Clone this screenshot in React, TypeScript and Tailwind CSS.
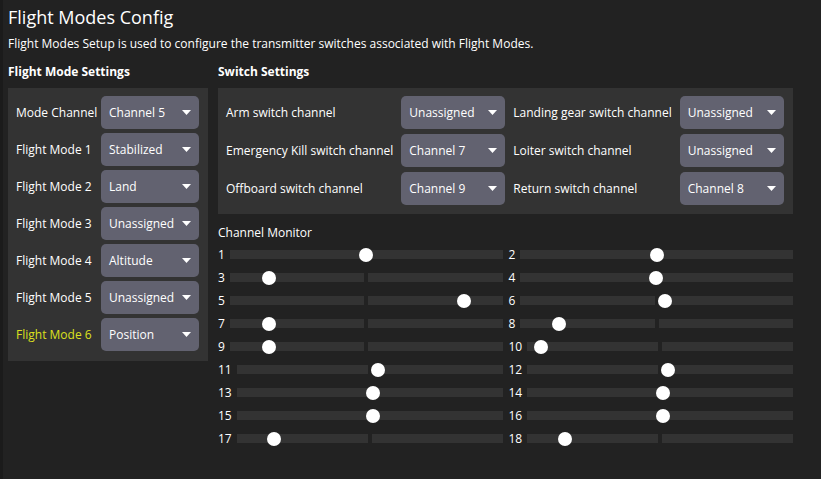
import React from "react";

/* ── Data ───────────────────────────────────────────────────────── */
const FLIGHT_MODES = [
  { label: "Mode Channel", value: "Channel 5" },
  { label: "Flight Mode 1", value: "Stabilized" },
  { label: "Flight Mode 2", value: "Land" },
  { label: "Flight Mode 3", value: "Unassigned" },
  { label: "Flight Mode 4", value: "Altitude" },
  { label: "Flight Mode 5", value: "Unassigned" },
  { label: "Flight Mode 6", value: "Position", active: true },
];

const SWITCHES = [
  ["Arm switch channel", "Unassigned", "Landing gear switch channel", "Unassigned"],
  ["Emergency Kill switch channel", "Channel 7", "Loiter switch channel", "Unassigned"],
  ["Offboard switch channel", "Channel 9", "Return switch channel", "Channel 8"],
];

// knob position as a fraction of the track width, channels 1..18
const CHANNELS = [
  0.5, 0.5, 0.143, 0.496, 0.86, 0.529, 0.143, 0.142, 0.142, 0.051, 0.532, 0.53,
  0.512, 0.51, 0.512, 0.51, 0.142, 0.142,
];

/* ── Combo box ──────────────────────────────────────────────────── */
function Combo({ value, width }: { value: string; width: string }) {
  return (
    <div
      className={`${width} h-[33px] rounded-[5px] bg-[#626270] flex items-center justify-between pl-[8px] pr-[8px] text-white whitespace-nowrap`}
    >
      <span>{value}</span>
      <svg width="9" height="5" viewBox="0 0 9 5" className="shrink-0">
        <polygon points="0,0 9,0 4.5,5" fill="#ffffff" />
      </svg>
    </div>
  );
}

/* ── Channel monitor row ────────────────────────────────────────── */
function ChannelRow({ num, frac }: { num: number; frac: number }) {
  return (
    <div className="h-[23px] flex items-center gap-[5px]">
      <span className="leading-none">{num}</span>
      <div className="relative flex-1 h-[9px] flex gap-[4px]">
        <div className="flex-1 bg-[#333333]" />
        <div className="flex-1 bg-[#333333]" />
        <div
          className="absolute top-1/2 w-[14px] h-[14px] -translate-x-1/2 -translate-y-1/2 rounded-full bg-white"
          style={{ left: `${frac * 100}%` }}
        />
      </div>
    </div>
  );
}

/* ================================================================
   App
   ================================================================ */
export default function App() {
  return (
    <div
      className="w-[821px] h-[479px] overflow-hidden bg-[#222222] text-white text-[12px] border-l-[3px] border-[#1b1b1b] pl-[5px] pt-[5px]"
      style={{ fontFamily: '"Open Sans", "Noto Sans", sans-serif' }}
    >
      <h1 className="text-[18px] leading-[25px]">Flight Modes Config</h1>
      <p className="mt-[5px] leading-[18px] whitespace-nowrap">
        Flight Modes Setup is used to configure the transmitter switches associated with Flight Modes.
      </p>

      <div className="mt-[10px] flex gap-[10px] items-start">
        {/* ── Flight mode settings ──────────────────────────────── */}
        <div className="w-[200px]">
          <h2 className="font-bold leading-[18px]">Flight Mode Settings</h2>
          <div className="mt-[7px] bg-[#333333] pt-[8px] pb-[10px] pl-[8px] pr-[9px] grid grid-cols-[1fr_auto] gap-y-[4px] items-center">
            {FLIGHT_MODES.map((m) => (
              <React.Fragment key={m.label}>
                <span className={`whitespace-nowrap ${m.active ? "text-[#dce01e]" : ""}`}>
                  {m.label}
                </span>
                <Combo value={m.value} width="w-[98px]" />
              </React.Fragment>
            ))}
          </div>
        </div>

        {/* ── Switch settings + monitor ─────────────────────────── */}
        <div className="w-[575px]">
          <h2 className="font-bold leading-[18px]">Switch Settings</h2>
          <div className="mt-[7px] bg-[#333333] pt-[8px] pb-[9px] pl-[8px] pr-[10px] grid grid-cols-[1fr_auto_auto_auto] gap-x-[8px] gap-y-[5px] items-center">
            {SWITCHES.map((row) => (
              <React.Fragment key={row[0]}>
                <span className="whitespace-nowrap">{row[0]}</span>
                <Combo value={row[1]} width="w-[104px]" />
                <span className="whitespace-nowrap">{row[2]}</span>
                <Combo value={row[3]} width="w-[104px]" />
              </React.Fragment>
            ))}
          </div>

          <div className="mt-[10px] leading-[18px]">Channel Monitor</div>
          <div className="mt-[1px] grid grid-cols-2 gap-x-[6px]">
            {CHANNELS.map((f, i) => (
              <ChannelRow key={i} num={i + 1} frac={f} />
            ))}
          </div>
        </div>
      </div>
    </div>
  );
}
